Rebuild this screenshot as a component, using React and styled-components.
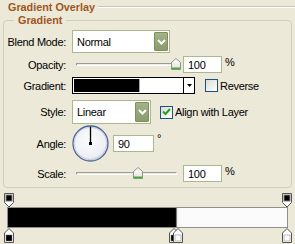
import React from "react"
import styled, { createGlobalStyle } from "styled-components"

const GlobalStyle = createGlobalStyle`
  html, body {
    margin: 0;
    background: #ece9d8;
  }
  body {
    font-family: "Liberation Sans", Arial, sans-serif;
    font-size: 11px;
    color: #000;
  }
`

const Dialog = styled.div`
  width: 295px;
  height: 244px;
  overflow: hidden;
  background: #ece9d8;
  letter-spacing: -0.3px;
`

const Header = styled.div`
  display: flex;
  align-items: center;
  height: 14px;
  padding-left: 8px;
`

const Title = styled.span`
  font-weight: bold;
  font-size: 10.8px;
  line-height: 14px;
  color: #a0561c;
  letter-spacing: 0;
`

const Rule = styled.div`
  flex: 1;
  margin-left: 3px;
  border-top: 1px solid #c9c6b6;
  border-bottom: 1px solid #fff;
`

const Group = styled.div`
  margin: 6px 3px 0;
  padding: 0 0 5px 0;
  border: 1px solid #d0d0bf;
  border-radius: 4px;
`

const GroupHead = styled.div`
  display: flex;
  height: 12px;
  margin-top: -7px;
  padding-left: 10px;
`

const Legend = styled.span`
  padding: 0 4px;
  font-weight: bold;
  font-size: 10.8px;
  line-height: 12px;
  color: #a0561c;
  background: #ece9d8;
  letter-spacing: 0;
`

const Row = styled.div`
  display: flex;
  align-items: center;
  height: ${p => p.$h}px;
  margin-top: ${p => p.$mt}px;
`

const Label = styled.div`
  flex-shrink: 0;
  width: 62px;
  margin-right: 6px;
  text-align: right;
`

const Select = styled.div`
  display: flex;
  align-items: center;
  box-sizing: border-box;
  width: ${p => p.$w}px;
  height: ${p => p.$h}px;
  padding: 1px;
  background: #fff;
  border: 1px solid #a8b98e;
`

const SelectValue = styled.span`
  flex: 1;
  padding-left: 3px;
`

const SelectButton = styled.div`
  display: flex;
  align-items: center;
  justify-content: center;
  box-sizing: border-box;
  width: 14px;
  height: ${p => p.$h}px;
  background: linear-gradient(#a3b288, #8b9b6c);
  border: 1px solid #7f8f62;
  border-radius: 1px;
`

const Slider = styled.div`
  position: relative;
  width: 109px;
  height: 17px;
  flex-shrink: 0;
`

const Track = styled.div`
  box-sizing: border-box;
  width: 101px;
  height: 3px;
  margin: 7px 0 0 4px;
  background: #eeede5;
  border-top: 1px solid #9d9b94;
  border-left: 1px solid #9d9b94;
  border-bottom: 1px solid #fff;
  border-right: 1px solid #fff;
`

const Thumb = styled.svg`
  position: absolute;
  top: 2px;
  width: 10px;
  height: 12px;
`

const Field = styled.div`
  box-sizing: border-box;
  width: ${p => p.$w}px;
  height: 17px;
  margin-left: ${p => p.$ml}px;
  padding: 1px 0 0 4px;
  line-height: 14px;
  background: #fff;
  border: 1px solid #a8b98e;
`

const Unit = styled.span`
  margin-left: 3px;
  align-self: flex-start;
  margin-top: ${p => p.$mt}px;
`

const Picker = styled.div`
  display: flex;
  box-sizing: border-box;
  width: 123px;
  height: 17px;
  border: 1px solid #000;
  background: #fff;
`

const Swatch = styled.div`
  flex: 1;
  margin: 1px;
  background: linear-gradient(to right, #000 0%, #000 60%, #fff 61%, #fff 100%);
`

const PickerArrow = styled.div`
  display: flex;
  align-items: center;
  justify-content: center;
  width: 10px;
  border-left: 1px solid #000;
`

const Check = styled.div`
  display: flex;
  align-items: center;
  margin-left: ${p => p.$ml}px;
`

const Box = styled.div`
  display: flex;
  align-items: center;
  justify-content: center;
  box-sizing: border-box;
  width: 13px;
  height: 13px;
  margin-right: 2px;
  border: 1px solid #1c5180;
  background: linear-gradient(135deg, #dcdcd4, #fff);
`

const Dial = styled.svg`
  width: 37px;
  height: 37px;
  flex-shrink: 0;
`

const Editor = styled.div`
  margin: 5px 0 0 7px;
  width: 281px;
`

const StopLane = styled.div`
  position: relative;
  height: ${p => p.$h}px;
  margin-left: 1px;
  width: 278px;
`

const Stop = styled.svg`
  position: absolute;
  top: 0;
  width: 10px;
  height: 15px;
`

const Bar = styled.div`
  box-sizing: border-box;
  height: 21px;
  border: 1px solid #8f8f8f;
  background: linear-gradient(to right, #000 0%, #000 60%, #fbfbfb 60.8%, #fbfbfb 100%);
`

const Chevron = () => (
  <svg width="9" height="6" viewBox="0 0 9 6">
    <polyline points="1,1 4.5,4.5 8,1" fill="none" stroke="#fff" strokeWidth="2" />
  </svg>
)

const SliderThumb = ({ pct }) => (
  <Thumb viewBox="0 0 10 12" style={{ left: 4 + pct * 100 - 5 }}>
    <defs>
      <linearGradient id="thumbfill" x1="0" y1="0" x2="0" y2="1">
        <stop offset="0" stopColor="#fff" />
        <stop offset="1" stopColor="#e3e2da" />
      </linearGradient>
    </defs>
    <path d="M5 0.5 L9.5 4.5 V11.5 H0.5 V4.5 Z" fill="url(#thumbfill)" stroke="#8d9282" />
    <rect x="1" y="9.5" width="8" height="1.5" fill="#3fae3f" />
  </Thumb>
)

const TopStop = ({ pct }) => (
  <Stop viewBox="0 0 10 15" style={{ left: `calc(${pct}% - 4.5px)` }}>
    <path d="M0.5 0.5 H9.5 V9.5 L5 14 L0.5 9.5 Z" fill="#fff" stroke="#555" />
    <rect x="1.5" y="1.5" width="7" height="7" fill="#7a7a7a" />
    <rect x="2.5" y="2.5" width="5" height="5" fill="#000" />
  </Stop>
)

const BottomStop = ({ pct, color }) => (
  <Stop viewBox="0 0 10 15" style={{ left: `calc(${pct}% - 4.5px)` }}>
    <path d="M5 0.5 L9.5 5 V14.5 H0.5 V5 Z" fill="#fff" stroke="#555" />
    <rect x="2" y="7" width="6" height="6" fill={color} stroke="#777" strokeWidth="0.5" />
  </Stop>
)

const CheckMark = () => (
  <svg width="9" height="8" viewBox="0 0 9 8">
    <polyline points="1,3.5 3.5,6 8,1" fill="none" stroke="#21a121" strokeWidth="2" />
  </svg>
)

const App = () => {
  return (
    <Dialog>
      <GlobalStyle />
      <Header>
        <Title>Gradient Overlay</Title>
        <Rule />
      </Header>
      <Group>
        <GroupHead>
          <Legend>Gradient</Legend>
        </GroupHead>

        <Row $h={23} $mt={4}>
          <Label>Blend Mode:</Label>
          <Select $w={98} $h={23}>
            <SelectValue>Normal</SelectValue>
            <SelectButton $h={19}>
              <Chevron />
            </SelectButton>
          </Select>
        </Row>

        <Row $h={17} $mt={3}>
          <Label>Opacity:</Label>
          <Slider>
            <Track />
            <SliderThumb pct={1} />
          </Slider>
          <Field $w={39} $ml={2}>100</Field>
          <Unit $mt={0}>%</Unit>
        </Row>

        <Row $h={17} $mt={4}>
          <Label>Gradient:</Label>
          <Picker>
            <Swatch />
            <PickerArrow>
              <svg width="5" height="3" viewBox="0 0 5 3">
                <polygon points="0,0 5,0 2.5,3" fill="#000" />
              </svg>
            </PickerArrow>
          </Picker>
          <Check $ml={10}>
            <Box />
            Reverse
          </Check>
        </Row>

        <Row $h={24} $mt={6}>
          <Label>Style:</Label>
          <Select $w={79} $h={24}>
            <SelectValue>Linear</SelectValue>
            <SelectButton $h={20}>
              <Chevron />
            </SelectButton>
          </Select>
          <Check $ml={9}>
            <Box>
              <CheckMark />
            </Box>
            Align with Layer
          </Check>
        </Row>

        <Row $h={37} $mt={1}>
          <Label>Angle:</Label>
          <Dial viewBox="0 0 37 37">
            <defs>
              <radialGradient id="dialfill" cx="0.45" cy="0.4" r="0.6">
                <stop offset="0" stopColor="#fafbfd" />
                <stop offset="0.8" stopColor="#eef0f6" />
                <stop offset="1" stopColor="#d3d8e6" />
              </radialGradient>
            </defs>
            <circle cx="18.5" cy="18.5" r="17.5" fill="url(#dialfill)" stroke="#4d6596" strokeWidth="1.3" />
            <circle cx="18.5" cy="18.5" r="16.3" fill="none" stroke="#b9c3da" strokeWidth="0.8" />
            <line x1="18.5" y1="1.5" x2="18.5" y2="18.5" stroke="#000" strokeWidth="1.3" />
            <rect x="17" y="17" width="3" height="3" fill="#000" />
          </Dial>
          <Field $w={41} $ml={4}>90</Field>
          <Unit $mt={7}>°</Unit>
        </Row>

        <Row $h={17} $mt={3}>
          <Label>Scale:</Label>
          <Slider>
            <Track />
            <SliderThumb pct={0.615} />
          </Slider>
          <Field $w={39} $ml={2}>100</Field>
          <Unit $mt={0}>%</Unit>
        </Row>
      </Group>

      <Editor>
        <StopLane $h={14}>
          <TopStop pct={0} />
          <TopStop pct={100} />
        </StopLane>
        <Bar />
        <StopLane $h={16}>
          <BottomStop pct={0} color="#000" />
          <BottomStop pct={59.5} color="#000" />
          <BottomStop pct={61} color="#fff" />
          <BottomStop pct={100} color="#fff" />
        </StopLane>
      </Editor>
    </Dialog>
  )
}

export default App
